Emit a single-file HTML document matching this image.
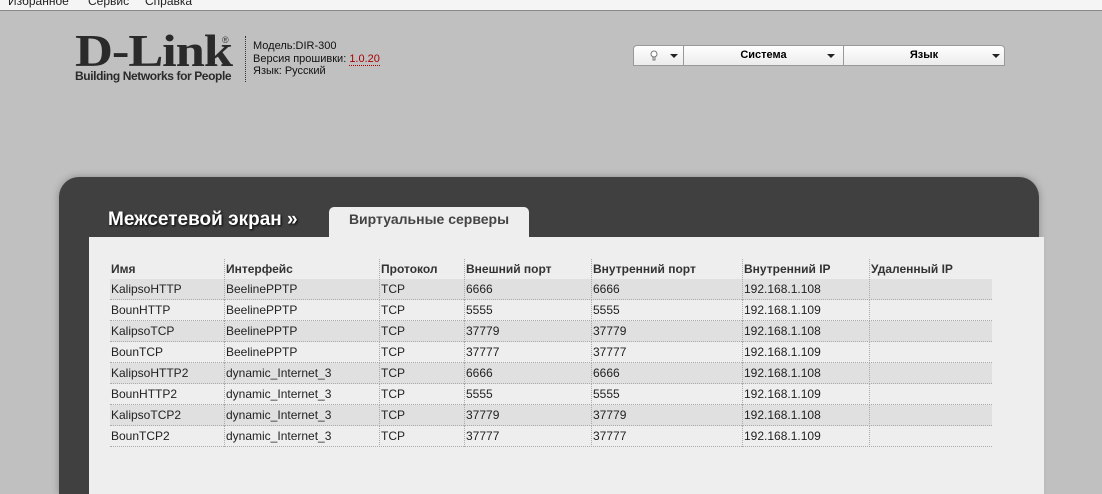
<!DOCTYPE html>
<html><head><meta charset="utf-8"><style>
*{margin:0;padding:0;box-sizing:border-box}
html,body{width:1102px;height:494px;overflow:hidden}
body{background:#c0c0c0;font-family:"Liberation Sans",Arial,sans-serif;position:relative}
.top{position:absolute;left:0;top:0;width:1102px;height:11px;background:#f5f5f5;border-bottom:1px solid #8a8a8a;overflow:hidden}
.top span{position:absolute;top:-6px;font-size:12px;color:#222}
.logo{position:absolute;left:75px;top:31px;font-family:"Liberation Serif",serif;font-weight:bold;font-size:45px;color:#2a2a2a;line-height:40px;transform:scaleX(1.17);transform-origin:left top;letter-spacing:-1px}
.tag{position:absolute;left:75px;top:69px;font-size:12px;font-weight:bold;color:#2a2a2a;letter-spacing:-0.4px}
.reg{position:absolute;left:222px;top:35px;font-size:9px;color:#333}
.vl{position:absolute;left:245px;top:36px;height:46px;border-left:1px dotted #333}
.info{position:absolute;left:253px;top:40px;font-size:11px;line-height:12.5px;color:#111}
.info u{color:#a00;text-decoration:none;border-bottom:1px dotted #a00}
.menu{position:absolute;left:633px;top:45px;width:372px;height:21px;background:linear-gradient(#fff,#ececec);border:1px solid #999;border-radius:4px 4px 0 0;font-size:11px;font-weight:bold}
.menu div{position:absolute;top:0;height:19px;line-height:19px;text-align:center;border-right:1px solid #999}
.tri{position:absolute;top:8px;width:0;height:0;border-left:4px solid transparent;border-right:4px solid transparent;border-top:4px solid #222}
.panel{position:absolute;left:59px;top:177px;width:980px;height:317px;background:#404040;border-radius:20px 20px 0 0;box-shadow:0 0 8px rgba(0,0,0,.3)}
.title{position:absolute;left:108px;top:209px;font-size:19px;font-weight:bold;color:#fff;text-shadow:1px 1px 2px #000}
.tab{position:absolute;left:329px;top:207px;width:200px;height:32px;background:#eee;border-radius:5px 5px 0 0;text-align:center;font-size:14px;font-weight:bold;color:#444;line-height:24px}
.content{position:absolute;left:89px;top:237px;width:955px;height:257px;background:#eeeeee}
.row{position:absolute;left:110px;width:882px;height:21px;font-size:12px;color:#222;border-bottom:1px dotted #aaa}
.row.s{background:#e0e0e0}
.row span{position:absolute;top:0;height:21px;line-height:20px;padding-left:1px}
.row span+span{border-left:1px dotted #aaa}
.hd{font-weight:bold;color:#333}
</style></head><body>
<div class="top"><span style="left:8px">Избранное</span><span style="left:88px">Сервис</span><span style="left:145px">Справка</span></div>
<div class="logo">D-Link</div>
<div class="reg">®</div>
<div class="tag">Building Networks for People</div>
<div class="vl"></div>
<div class="info">Модель:DIR-300<br>Версия прошивки: <u>1.0.20</u><br>Язык: Русский</div>
<div class="menu">
<div style="left:0;width:50px"><svg style="position:absolute;left:16px;top:4px" width="8" height="12" viewBox="0 0 8 12"><circle cx="4" cy="4" r="3" fill="#fff" stroke="#777"/><path d="M3 7v3h2V7" fill="none" stroke="#777"/></svg><i class="tri" style="left:36px"></i></div>
<div style="left:50px;width:160px">Система<i class="tri" style="left:143px"></i></div>
<div style="left:210px;width:160px;border-right:none">Язык<i class="tri" style="left:148px"></i></div>
</div>
<div class="panel"></div>
<div class="title">Межсетевой экран »</div>
<div class="tab">Виртуальные серверы</div>
<div class="content"></div>
<div id="t"></div>
<script>
var rows=[["Имя","Интерфейс","Протокол","Внешний порт","Внутренний порт","Внутренний IP","Удаленный IP"],
["KalipsoHTTP","BeelinePPTP","TCP","6666","6666","192.168.1.108",""],
["BounHTTP","BeelinePPTP","TCP","5555","5555","192.168.1.109",""],
["KalipsoTCP","BeelinePPTP","TCP","37779","37779","192.168.1.108",""],
["BounTCP","BeelinePPTP","TCP","37777","37777","192.168.1.109",""],
["KalipsoHTTP2","dynamic_Internet_3","TCP","6666","6666","192.168.1.108",""],
["BounHTTP2","dynamic_Internet_3","TCP","5555","5555","192.168.1.109",""],
["KalipsoTCP2","dynamic_Internet_3","TCP","37779","37779","192.168.1.108",""],
["BounTCP2","dynamic_Internet_3","TCP","37777","37777","192.168.1.109",""]];
var xs=[0,114,269,354,481,632,759,882],h="";
rows.forEach(function(r,i){
var top=i==0?259:279+(i-1)*21;
h+='<div class="row'+(i==0?' hd':(i%2?' s':''))+'" style="top:'+top+'px">';
r.forEach(function(c,j){h+='<span style="left:'+xs[j]+'px;width:'+(xs[j+1]-xs[j])+'px">'+c+'</span>'});
h+='</div>';});
document.getElementById('t').innerHTML=h;
</script>
</body></html>
